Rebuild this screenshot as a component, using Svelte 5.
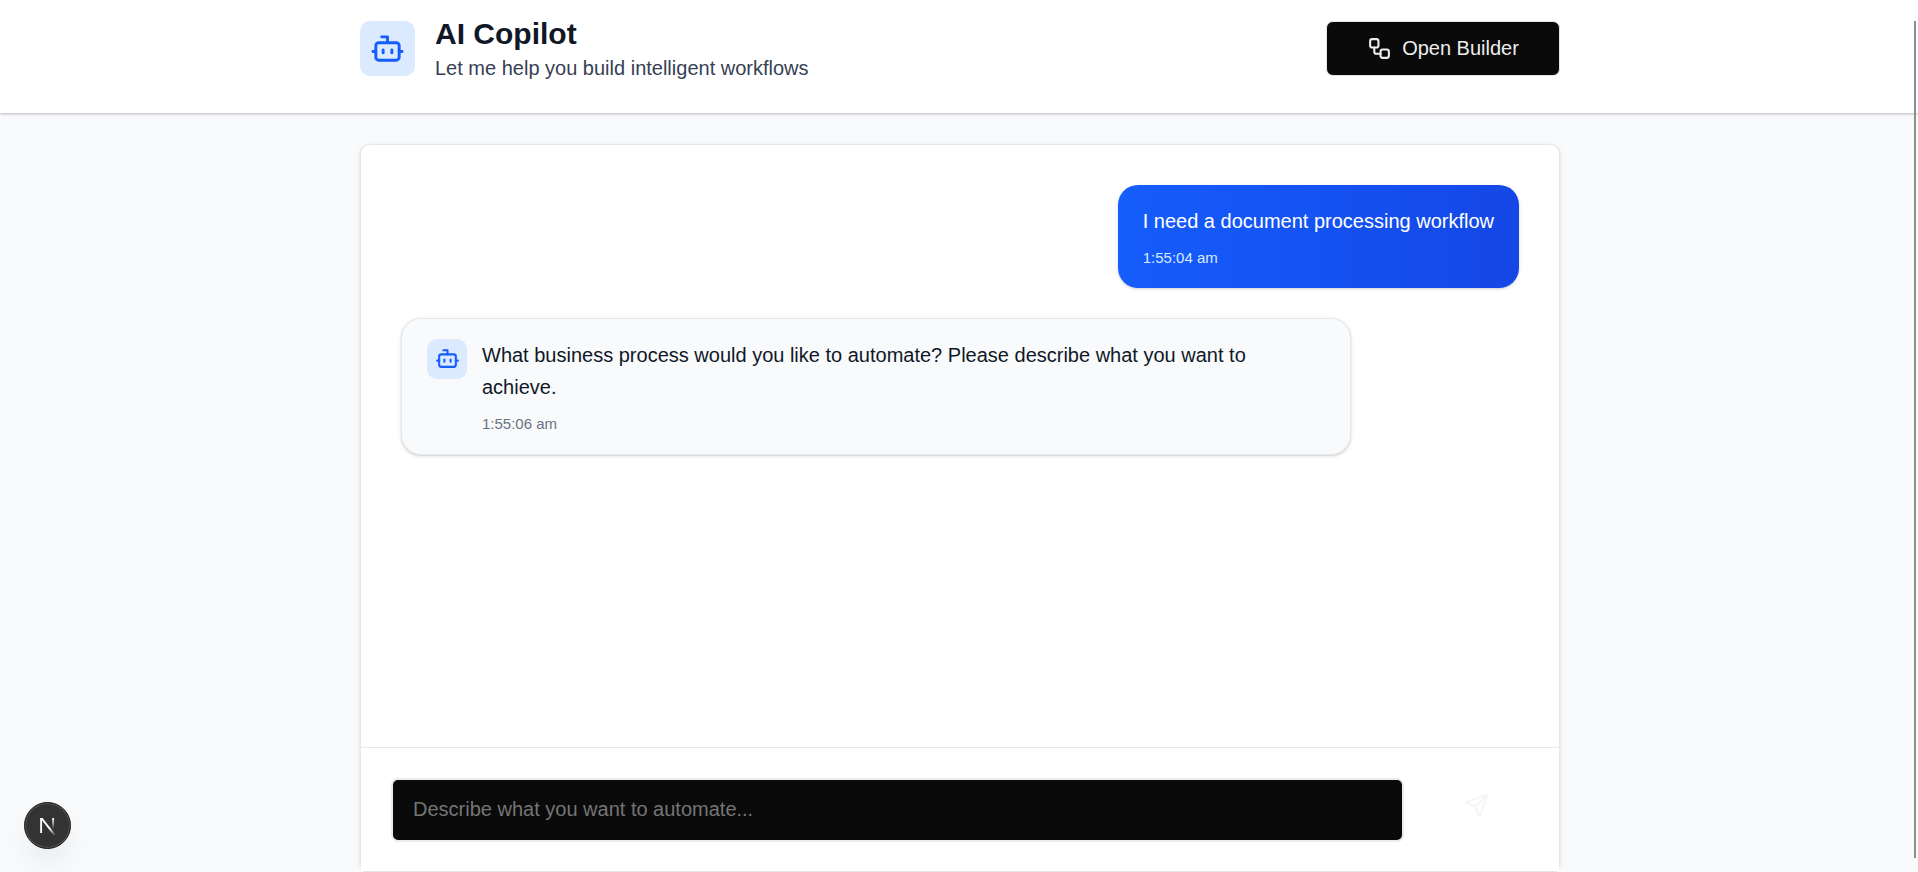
<script>
  const messages = [
    { role: 'user', text: 'I need a document processing workflow', time: '1:55:04 am' },
    {
      role: 'bot',
      text: 'What business process would you like to automate? Please describe what you want to achieve.',
      time: '1:55:06 am'
    }
  ];
</script>

{#snippet bot()}
  <svg class="icon" viewBox="0 0 24 24">
    <path d="M12 8V4H8" />
    <rect width="16" height="12" x="4" y="8" rx="2" />
    <path d="M2 14h2M20 14h2M15 13v2M9 13v2" />
  </svg>
{/snippet}

<div class="page">
  <header>
    <div class="bar">
      <div class="brand">
        <div class="tile">{@render bot()}</div>
        <div>
          <h1>AI Copilot</h1>
          <p>Let me help you build intelligent workflows</p>
        </div>
      </div>
      <button class="open">
        <svg class="icon" viewBox="0 0 24 24">
          <rect width="8" height="8" x="3" y="3" rx="2" />
          <path d="M7 11v4a2 2 0 0 0 2 2h4" />
          <rect width="8" height="8" x="13" y="13" rx="2" />
        </svg>
        Open Builder
      </button>
    </div>
  </header>

  <main>
    <div class="messages">
      {#each messages as m}
        <div class="bubble {m.role}">
          {#if m.role === 'bot'}
            <div class="tile small">{@render bot()}</div>
          {/if}
          <div class="body">
            <p>{m.text}</p>
            <time>{m.time}</time>
          </div>
        </div>
      {/each}
    </div>
    <form>
      <input placeholder="Describe what you want to automate..." />
      <button class="send" type="button" aria-label="Send">
        <svg class="icon" viewBox="0 0 24 24">
          <path d="M14.536 21.686a.5.5 0 0 0 .937-.024l6.5-19a.496.496 0 0 0-.635-.635l-19 6.5a.5.5 0 0 0-.024.937l7.93 3.18a2 2 0 0 1 1.112 1.11z" />
          <path d="m21.854 2.147-10.94 10.939" />
        </svg>
      </button>
    </form>
  </main>

  <div class="dev">
    <svg viewBox="0 0 48 48">
      <defs>
        <linearGradient id="diag" gradientUnits="userSpaceOnUse" x1="26" y1="27" x2="32" y2="35">
          <stop stop-color="#fff" />
          <stop offset="1" stop-color="#fff" stop-opacity="0" />
        </linearGradient>
        <linearGradient id="stem" gradientUnits="userSpaceOnUse" x1="0" y1="16" x2="0" y2="28">
          <stop stop-color="#fff" />
          <stop offset="1" stop-color="#fff" stop-opacity="0" />
        </linearGradient>
      </defs>
      <rect x="16.2" y="16" width="2" height="16" fill="#fff" />
      <path d="M16.2 16h2.5L32.6 33.6 30.8 35z" fill="url(#diag)" />
      <rect x="29" y="16" width="2" height="12" fill="url(#stem)" />
    </svg>
  </div>
  <div class="thumb"></div>
</div>

<style>
  :global(body) {
    overflow: hidden;
  }
  * {
    box-sizing: border-box;
  }
  h1,
  p {
    margin: 0;
  }
  .page {
    height: 872px;
    display: flex;
    flex-direction: column;
    align-items: center;
    background: #f9fafc;
    font-family: 'Liberation Sans', Arial, sans-serif;
    font-size: 20px;
    color: #101828;
  }
  header {
    width: 100%;
    height: 113px;
    flex: none;
    display: flex;
    justify-content: center;
    padding: 15px 0 30px 2px;
    background: #fff;
    box-shadow: 0 1px 4px rgba(0, 0, 0, 0.1), 0 1px 2px rgba(0, 0, 0, 0.16);
  }
  .bar {
    width: 1200px;
    display: flex;
    align-items: flex-start;
    justify-content: space-between;
  }
  .brand {
    display: flex;
    align-items: flex-start;
    gap: 20px;
  }
  .brand .tile {
    margin-top: 6px;
  }
  h1 {
    font-size: 30px;
    line-height: 38px;
    font-weight: 700;
  }
  .brand p {
    line-height: 30px;
    color: #364153;
  }
  .icon {
    display: block;
    flex: none;
    fill: none;
    stroke: currentColor;
    stroke-width: 2;
    stroke-linecap: round;
    stroke-linejoin: round;
  }
  .tile {
    width: 55px;
    height: 55px;
    flex: none;
    display: grid;
    place-items: center;
    border-radius: 10px;
    background: #dbeafe;
    color: #155dfc;
  }
  .tile .icon {
    width: 35px;
    height: 35px;
  }
  .tile.small {
    width: 40px;
    height: 40px;
  }
  .tile.small .icon {
    width: 25px;
    height: 25px;
  }
  button {
    font: inherit;
    padding: 0;
  }
  .open {
    width: 234px;
    height: 55px;
    margin-top: 6px;
    display: flex;
    align-items: center;
    justify-content: center;
    gap: 10px;
    border: 1px solid #e5e5e5;
    border-radius: 7px;
    background: #0a0a0a;
    color: #ededed;
  }
  .open .icon {
    width: 25px;
    height: 25px;
  }
  main {
    width: 1200px;
    height: 728px;
    flex: none;
    margin: 31px 0 0 2px;
    display: flex;
    flex-direction: column;
    border: 1px solid #e5e7eb;
    border-radius: 10px;
    background: #fff;
    box-shadow: 0 1px 4px rgba(0, 0, 0, 0.1), 0 1px 2px rgba(0, 0, 0, 0.06);
  }
  .messages {
    flex: 1;
    display: flex;
    flex-direction: column;
    align-items: flex-start;
    gap: 30px;
    padding: 40px;
  }
  .bubble {
    display: flex;
    gap: 15px;
    padding: 20px 25px;
    border-radius: 20px;
    box-shadow: 0 1px 4px rgba(0, 0, 0, 0.1), 0 1px 2px rgba(0, 0, 0, 0.1);
  }
  .bubble p {
    line-height: 32.5px;
  }
  .bubble time {
    display: block;
    margin-top: 10px;
    font-size: 15px;
    line-height: 20px;
    color: #6a7282;
  }
  .user {
    align-self: flex-end;
    background: linear-gradient(90deg, #155dfc, #1447e6);
    color: #fff;
  }
  .user time {
    color: #dbeafe;
  }
  .bot {
    width: 950px;
    border: 1px solid #e5e7eb;
    background: #f9fafb;
  }
  form {
    display: flex;
    align-items: center;
    gap: 20px;
    height: 124px;
    padding: 0 30px;
    border-top: 1px solid #e5e7eb;
    background: #fff;
  }
  input {
    width: 1013px;
    height: 64px;
    padding: 0 20px;
    border: 2px solid #ebebeb;
    border-radius: 7px;
    background: #0a0a0a;
    color: #ededed;
    font: inherit;
    outline: none;
  }
  input::placeholder {
    color: #757575;
    opacity: 1;
  }
  .send {
    flex: 1;
    height: 64px;
    display: flex;
    align-items: center;
    justify-content: center;
    padding-bottom: 8px;
    border: 0;
    background: none;
    color: #f5f5f5;
  }
  .send .icon {
    width: 25px;
    height: 25px;
  }
  .dev {
    position: fixed;
    left: 24px;
    top: 802px;
    width: 47px;
    height: 47px;
    border-radius: 50%;
    border: 1px solid #171717;
    background: #333;
    box-shadow: inset 0 0 0 1px #555, 0 16px 32px -8px rgba(0, 0, 0, 0.12);
  }
  .dev svg {
    display: block;
    width: 45px;
    height: 45px;
  }
  .thumb {
    position: fixed;
    left: 1914px;
    top: 21px;
    width: 2px;
    height: 837px;
    background: #8f8f8f;
  }
</style>
